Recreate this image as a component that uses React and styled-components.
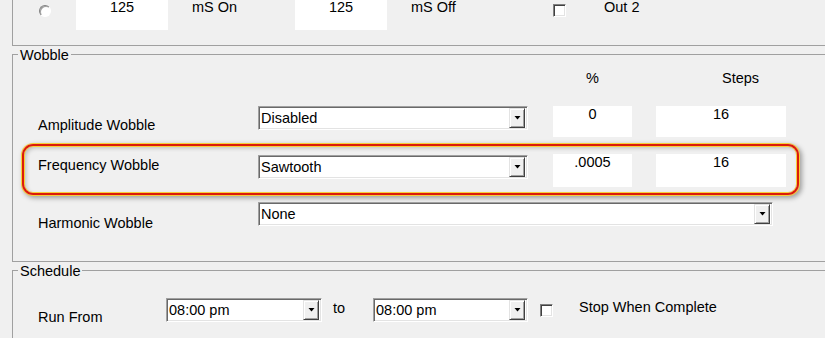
import React from "react";
import styled, { createGlobalStyle } from "styled-components";

const GlobalStyle = createGlobalStyle`
  html, body {
    margin: 0;
    padding: 0;
    background: #f0f0f0;
    overflow: hidden;
  }
  body {
    font-family: "Liberation Sans", Arial, sans-serif;
    font-size: 14.5px;
    color: #000;
  }
`;

const Page = styled.div`
  width: 825px;
  height: 338px;
  overflow: hidden;
  background: #f0f0f0;
  line-height: 16px;
`;

const TopGroup = styled.div`
  display: flow-root;
  margin-left: 12px;
  width: 830px;
  height: 45px;
  border-left: 1px solid #a0a0a0;
  border-bottom: 1px solid #a0a0a0;
`;

const TopRow = styled.div`
  display: grid;
  grid-template-columns: 37px 116px 103px 116px 142px 51px auto;
  align-items: start;
  padding-left: 26px;
  margin-top: -2px;
`;

// group box: frame with its caption pulled up over the top border
const GroupBox = styled.section`
  margin: 8px 0 0 12px;
  padding: 0 0 ${(p) => p.$bottom}px 0;
  width: 830px;
  border: 1px solid #a0a0a0;
`;

const Caption = styled.div`
  width: fit-content;
  margin: -7px 0 0 5px;
  padding: 0 2px;
  line-height: 14px;
  background: #f0f0f0;
`;

const GroupBody = styled.div`
  padding-top: ${(p) => p.$top}px;
`;

const Grid = styled.div`
  display: grid;
  grid-template-columns: ${(p) => p.$cols};
  align-items: start;
  margin-top: ${(p) => p.$top || 0}px;
  position: relative;
`;

const Label = styled.div`
  padding-top: ${(p) => p.$top || 0}px;
  padding-left: ${(p) => p.$left || 0}px;
  width: ${(p) => (p.$w ? `${p.$w}px` : "auto")};
  text-align: ${(p) => p.$align || "left"};
  white-space: nowrap;
`;

const TextBox = styled.div`
  width: ${(p) => p.$w}px;
  height: ${(p) => p.$h}px;
  padding-top: ${(p) => p.$pt || 0}px;
  box-sizing: border-box;
  background: #fff;
  text-align: center;
`;

const Combo = styled.div`
  box-sizing: border-box;
  width: ${(p) => p.$w}px;
  height: 24px;
  margin-top: ${(p) => p.$top || 0}px;
  background: #fff;
  border: 1px solid;
  border-color: #a0a0a0 #fff #fff #a0a0a0;
  box-shadow: inset 1px 1px 0 #696969, inset -1px -1px 0 #e3e3e3;
  display: flex;
  align-items: center;
  padding: 1px;
`;

const ComboText = styled.span`
  flex: 1;
  padding-left: 1px;
  white-space: nowrap;
  overflow: hidden;
`;

const DropButton = styled.div`
  box-sizing: border-box;
  width: 16px;
  height: 20px;
  margin-right: 1px;
  background: #f0f0f0;
  border: 1px solid;
  border-color: #e3e3e3 #404040 #404040 #e3e3e3;
  box-shadow: inset 1px 1px 0 #fff, inset -1px -1px 0 #a0a0a0;
  display: flex;
  align-items: center;
  justify-content: center;
`;

const Radio = styled.div`
  box-sizing: border-box;
  width: 12px;
  height: 12px;
  margin-top: 7px;
  border-radius: 50%;
  background: #fff;
  border: 1px solid;
  border-color: #808080 #fff #fff #808080;
  box-shadow: inset 1px 1px 0 #a0a0a0;
`;

const Check = styled.div`
  box-sizing: border-box;
  width: 13px;
  height: 13px;
  margin-top: 6px;
  margin-left: ${(p) => p.$left || 0}px;
  background: #fff;
  border: 1px solid;
  border-color: #808080 #fff #fff #808080;
  box-shadow: inset 1px 1px 0 #404040, inset -1px -1px 0 #e3e3e3;
`;

const Highlight = styled.div`
  position: absolute;
  left: 9px;
  top: -10px;
  width: 777px;
  height: 51px;
  box-sizing: border-box;
  border: 2px solid #dc1a0a;
  border-radius: 11px;
  pointer-events: none;
  box-shadow: 0 0 0 1px #f6cf3a, inset 0 0 0 1px #f6cf3a,
    2px 2px 5px 1px rgba(0, 0, 0, 0.35), inset 2px 2px 4px rgba(0, 0, 0, 0.22);
`;

const Arrow = () => (
  <svg width="7" height="4" viewBox="0 0 7 4">
    <polygon points="0.5,0 6.5,0 3.5,3.5" fill="#000" />
  </svg>
);

const Select = ({ w, top, value }) => (
  <Combo $w={w} $top={top}>
    <ComboText>{value}</ComboText>
    <DropButton>
      <Arrow />
    </DropButton>
  </Combo>
);

const wobbleCols = "245px 295px 103px 130px";
const scheduleCols = "153px 156px 51px 155px 51px auto";

export default function App() {
  return (
    <Page>
      <GlobalStyle />
      <TopGroup>
        <TopRow>
          <Radio />
          <TextBox $w={92} $h={32} $pt={1}>125</TextBox>
          <Label $top={1}>mS On</Label>
          <TextBox $w={92} $h={32} $pt={1}>125</TextBox>
          <Label $top={1}>mS Off</Label>
          <Check />
          <Label $top={1}>Out 2</Label>
        </TopRow>
      </TopGroup>

      <GroupBox $bottom={30}>
        <Caption>Wobble</Caption>
        <GroupBody $top={8}>
          <Grid $cols={wobbleCols}>
            <span />
            <span />
            <Label $align="center" $w={79}>%</Label>
            <Label $left={66}>Steps</Label>
          </Grid>
          <Grid $cols={wobbleCols} $top={20}>
            <Label $left={25} $top={11}>Amplitude Wobble</Label>
            <Select w={270} value="Disabled" />
            <TextBox $w={79} $h={31}>0</TextBox>
            <TextBox $w={130} $h={31}>16</TextBox>
          </Grid>
          <Grid $cols={wobbleCols} $top={17}>
            <Label $left={25} $top={3}>Frequency Wobble</Label>
            <Select w={270} top={1} value="Sawtooth" />
            <TextBox $w={79} $h={33}>.0005</TextBox>
            <TextBox $w={130} $h={33}>16</TextBox>
            <Highlight />
          </Grid>
          <Grid $cols={wobbleCols} $top={15}>
            <Label $left={25} $top={13}>Harmonic Wobble</Label>
            <div style={{ gridColumn: "2 / 5" }}>
              <Select w={515} value="None" />
            </div>
          </Grid>
        </GroupBody>
      </GroupBox>

      <GroupBox $bottom={40}>
        <Caption>Schedule</Caption>
        <GroupBody $top={20}>
          <Grid $cols={scheduleCols}>
            <Label $left={25} $top={11}>Run From</Label>
            <Select w={156} value="08:00 pm" />
            <Label $left={11} $top={2}>to</Label>
            <Select w={155} value="08:00 pm" />
            <Check $left={12} />
            <Label $top={1}>Stop When Complete</Label>
          </Grid>
        </GroupBody>
      </GroupBox>
    </Page>
  );
}
